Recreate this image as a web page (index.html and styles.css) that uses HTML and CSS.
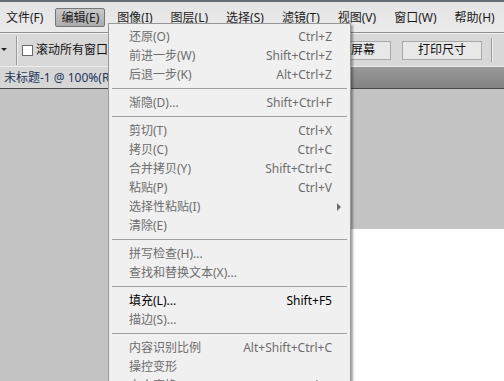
FILE: index.html
```html
<!DOCTYPE html>
<html lang="zh-CN">
<head>
<meta charset="UTF-8" />
<title>编辑菜单</title>
<link rel="stylesheet" href="styles.css">
</head>
<body>

  <div class="app">
    <!-- Main menu bar -->
    <ul class="menubar">
      <li>文件(F)</li>
      <li class="open">编辑(E)</li>
      <li>图像(I)</li>
      <li>图层(L)</li>
      <li>选择(S)</li>
      <li>滤镜(T)</li>
      <li>视图(V)</li>
      <li>窗口(W)</li>
      <li>帮助(H)</li>
    </ul>

    <!-- Zoom tool options -->
    <div class="options">
      <svg class="caret" viewBox="0 0 6 4" aria-hidden="true"><path d="M0 0 H6 L3 3 Z" /></svg>
      <span class="vsep"></span>
      <label class="check"><span class="box"></span>滚动所有窗口</label>
      <div class="zoom-btns">
        <button>实际像素</button>
        <button>适合屏幕</button>
        <button>填充屏幕</button>
        <button>打印尺寸</button>
      </div>
      <span class="vsep short"></span>
    </div>

    <!-- Document tabs -->
    <div class="doc-tabs">
      <div class="tab">未标题-1 @ 100%(RGB/8) ×</div>
    </div>

    <div class="workspace">
      <div class="canvas"></div>
    </div>
  </div>

  <!-- Open "编辑" dropdown -->
  <div class="dropdown">
    <div class="item"><span>还原(O)</span><span class="key">Ctrl+Z</span></div>
    <div class="item"><span>前进一步(W)</span><span class="key">Shift+Ctrl+Z</span></div>
    <div class="item"><span>后退一步(K)</span><span class="key">Alt+Ctrl+Z</span></div>
    <div class="sep"></div>
    <div class="item"><span>渐隐(D)...</span><span class="key">Shift+Ctrl+F</span></div>
    <div class="sep"></div>
    <div class="item"><span>剪切(T)</span><span class="key">Ctrl+X</span></div>
    <div class="item"><span>拷贝(C)</span><span class="key">Ctrl+C</span></div>
    <div class="item"><span>合并拷贝(Y)</span><span class="key">Shift+Ctrl+C</span></div>
    <div class="item"><span>粘贴(P)</span><span class="key">Ctrl+V</span></div>
    <div class="item"><span>选择性粘贴(I)</span><span class="key"></span><span class="arrow"></span></div>
    <div class="item"><span>清除(E)</span></div>
    <div class="sep"></div>
    <div class="item"><span>拼写检查(H)...</span></div>
    <div class="item"><span>查找和替换文本(X)...</span></div>
    <div class="sep"></div>
    <div class="item on"><span>填充(L)...</span><span class="key">Shift+F5</span></div>
    <div class="item"><span>描边(S)...</span></div>
    <div class="sep"></div>
    <div class="item"><span>内容识别比例</span><span class="key">Alt+Shift+Ctrl+C</span></div>
    <div class="item"><span>操控变形</span></div>
    <div class="item"><span>自由变换(F)</span><span class="key">Ctrl+T</span></div>
  </div>

</body>
</html>
```

FILE: styles.css
```css
/* Base */
body {
  margin: 0;
  width: 504px;
  height: 381px;
  overflow: hidden;
  position: relative;
  font-family: "Noto Sans", "Noto Sans CJK SC", sans-serif;
  font-size: 12px;
  line-height: 1;
  color: #000;
  background: #c3c3c3;
}

.app {
  display: flex;
  flex-direction: column;
  height: 381px;
}

/* Main menu bar */
.menubar {
  margin: 0;
  padding: 0;
  list-style: none;
  display: flex;
  align-items: center;
  gap: 6px;
  height: 30px;
  border-top: 2px solid #646c75;
  border-bottom: 1px solid #8e8e8e;
  background: linear-gradient(#e4e4e4, #ebebeb);
}
.menubar li {
  height: 17px;
  line-height: 17px;
  padding: 0 5px;
  border: 1px solid transparent;
  border-radius: 2px;
  color: #1a1a1a;
  white-space: nowrap;
}
.menubar li.open {
  border-color: #767676;
  background: linear-gradient(#c8c8c8, #acacac);
}

/* Tool options bar */
.options {
  display: flex;
  align-items: center;
  height: 33px;
  background: #d8d8d8;
  border-top: 1px solid #f2f2f2;
  box-sizing: border-box;
}
.caret {
  width: 6px;
  height: 4px;
  margin-left: 1px;
  fill: #222;
}
.vsep {
  width: 1px;
  height: 29px;
  margin-left: 9px;
  background: #9a9a9a;
  border-right: 1px solid #f0f0f0;
}
.vsep.short {
  height: 24px;
  margin-left: 9px;
}
.check {
  display: flex;
  align-items: center;
  margin-left: 4px;
  color: #111;
}
.check .box {
  width: 9px;
  height: 9px;
  margin-right: 3px;
  background: #fff;
  border: 1px solid #6a6a6a;
}
.zoom-btns {
  display: flex;
  gap: 11px;
  margin-left: 21px;
}
.zoom-btns button {
  width: 80px;
  height: 19px;
  padding: 0;
  font: inherit;
  color: #111;
  background: #e8e8e8;
  border: 1px solid #a8a8a8;
  border-radius: 0;
}

/* Document tab strip */
.doc-tabs {
  display: flex;
  height: 21px;
  background: linear-gradient(#989898, #838383);
  border-top: 1px solid #ececec;
  border-bottom: 1px solid #4a4a4a;
}
.tab {
  padding: 0 10px 0 4px;
  line-height: 21px;
  background: #d6d6d6;
  color: #22345a;
  white-space: nowrap;
}

/* Canvas area */
.workspace {
  flex: 1;
  background: #c3c3c3;
  padding: 140px 0 0 300px;
}
.canvas {
  height: 100%;
  background: #fff;
}

/* Dropdown menu */
.dropdown {
  position: absolute;
  top: 23px;
  left: 108px;
  width: 241px;
  padding-top: 3px;
  background: #f0f0f0;
  border: 1px solid #979797;
  box-shadow: 2px 2px 2px rgba(0, 0, 0, 0.35);
}
.item {
  display: grid;
  grid-template-columns: 1fr auto 18px;
  align-items: center;
  height: 19px;
  padding-left: 20px;
  color: #6d6d6d;
  white-space: nowrap;
}
.item.on {
  color: #000;
}
.arrow {
  width: 0;
  height: 0;
  margin-left: 5px;
  border-left: 4px solid #6d6d6d;
  border-top: 4px solid transparent;
  border-bottom: 4px solid transparent;
}
.sep {
  margin: 4px 3px;
  border-top: 1px solid #a0a0a0;
}
```
